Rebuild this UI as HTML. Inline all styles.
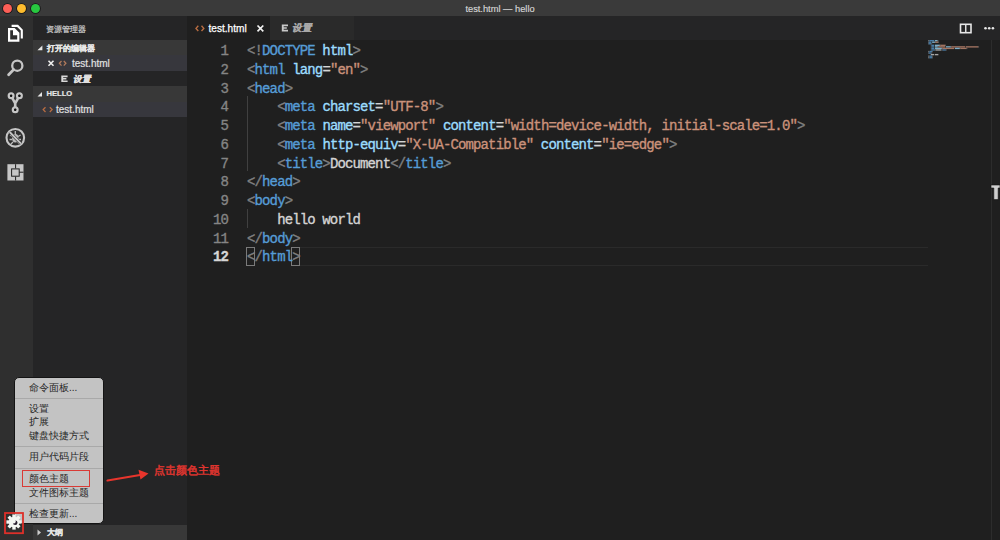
<!DOCTYPE html>
<html><head><meta charset="utf-8">
<style>
*{margin:0;padding:0;box-sizing:border-box}
html,body{width:1000px;height:540px;overflow:hidden;background:#1f1f1f;font-family:"Liberation Sans",sans-serif}
.a{position:absolute}
svg{position:absolute;overflow:visible}
#title{left:0;top:0;width:1000px;height:16px;background:#3a3a3a}
.tl{top:3.5px;width:9px;height:9px;border-radius:50%;box-shadow:0 0 0 0.8px rgba(10,10,10,.75)}
#ttext{left:0;top:3.5px;width:1000px;text-align:center;color:#d6d6d6;font-size:9.3px;line-height:11px;-webkit-text-stroke:0.15px}
#act{left:0;top:16px;width:33px;height:524px;background:#2f2f2f}
#side{left:33px;top:16px;width:154px;height:524px;background:#252526}
#tabs{left:187px;top:16px;width:813px;height:24px;background:#252526}
.sh{left:33px;width:154px;background:#383838}
.code{font-family:"Liberation Mono",monospace;font-size:14px;letter-spacing:-0.87px;white-space:pre;line-height:18.76px;color:#d4d4d4;-webkit-text-stroke:0.35px}
.ln{left:186px;width:42px;text-align:right;color:#858585}
.t{color:#569cd6}.at{color:#9cdcfe}.s{color:#cb927b}.p{color:#808080}
.ui{color:#cccccc;font-size:10px;white-space:nowrap;line-height:12px;-webkit-text-stroke:0.2px}
#menu{left:14px;top:377px;width:89.5px;height:147px;background:#c3c3c3;border:1px solid #141414;border-radius:5px}
.mi{left:29px;color:#262626;font-size:10px;line-height:12px;white-space:nowrap}
.sep{left:15px;width:87.5px;height:1px;background:#a9a9a9}
.guide{width:1px;background:#404040}
</style></head><body>
<div class="a" id="title"></div>
<div class="a tl" style="left:3px;background:#fc5f57"></div>
<div class="a tl" style="left:17px;background:#fdbc2e"></div>
<div class="a tl" style="left:31px;background:#28c840"></div>
<div class="a" id="ttext">test.html — hello</div>

<div class="a" id="act"></div>
<div class="a" id="side"></div>
<div class="a" id="tabs"></div>

<!-- activity bar icons -->
<svg style="left:0;top:16px" width="33" height="180" viewBox="0 16 33 180">
  <!-- files -->
  <path d="M11.6 25.9 H17.6 L21.8 30.1 V38.6" fill="none" stroke="#fff" stroke-width="2.1"/>
  <path d="M8 28 H14.6 L19.4 32.8 V41.8 H8 Z" fill="#fff"/>
  <path d="M10.2 30.2 H13 V35.2 H17.2 V39.6 H10.2 Z" fill="#2f2f2f"/>
  <!-- search -->
  <circle cx="17.3" cy="65.7" r="5.1" fill="none" stroke="#c6c6c6" stroke-width="2.3"/>
  <path d="M13.6 69.6 L8.6 74.8" stroke="#c6c6c6" stroke-width="2.8" stroke-linecap="round"/>
  <!-- git -->
  <path d="M11.1 95.8 L15.2 103.3 L19.4 95.8 M15.2 103.3 V109.8" fill="none" stroke="#c6c6c6" stroke-width="2.6"/>
  <circle cx="11.1" cy="95.8" r="2.3" fill="#2f2f2f" stroke="#c6c6c6" stroke-width="2.4"/>
  <circle cx="19.4" cy="95.8" r="2.3" fill="#2f2f2f" stroke="#c6c6c6" stroke-width="2.4"/>
  <circle cx="15.2" cy="109.8" r="2.3" fill="#2f2f2f" stroke="#c6c6c6" stroke-width="2.4"/>
  <circle cx="11.1" cy="95.8" r="1.2" fill="#111"/>
  <circle cx="19.4" cy="95.8" r="1.2" fill="#111"/>
  <circle cx="15.2" cy="109.8" r="1.2" fill="#111"/>
  <!-- debug -->
  <circle cx="15.3" cy="137.8" r="8.8" fill="none" stroke="#c6c6c6" stroke-width="2.1"/>
  <ellipse cx="15.3" cy="138.3" rx="3.2" ry="4.2" fill="#bdbdbd"/>
  <path d="M15.3 131 V134 M10 135 L12.5 136.5 M20.6 135 L18.1 136.5 M9.5 139.5 H12 M21 139.5 H18.6 M11 144 L13 142 M19.6 144 L17.6 142" stroke="#bdbdbd" stroke-width="1.3"/>
  <path d="M9.6 132 L21 143.6" stroke="#2f2f2f" stroke-width="3.2"/>
  <path d="M9.6 132 L21 143.6" stroke="#c6c6c6" stroke-width="1.9"/>
  <!-- extensions -->
  <rect x="7.4" y="164.2" width="16.1" height="16.3" fill="#c6c6c6"/>
  <rect x="11.6" y="168.9" width="7.6" height="7.3" fill="#c6c6c6" stroke="#1e1e1e" stroke-width="1"/>
  <path d="M15.6 164.2 V168.4 M19.2 172.2 H23.5 M15.6 176.6 V180.5" stroke="#1e1e1e" stroke-width="1"/>
</svg>

<!-- sidebar -->
<div class="a ui" style="left:46px;top:23.5px;font-size:8px;color:#c8c8c8;-webkit-text-stroke:0.25px">资源管理器</div>
<div class="a sh" style="top:40px;height:15px"></div>
<div class="a" style="left:33px;top:55px;width:154px;height:16px;background:#37373d"></div>
<div class="a sh" style="top:86px;height:15.5px"></div>
<div class="a" style="left:33px;top:101.5px;width:154px;height:15.5px;background:#37373d"></div>
<svg style="left:0;top:0" width="200" height="140">
  <path d="M42.4 45.5 V50.3 H37.4 Z" fill="#e6e6e6"/>
  <path d="M42 92 V96.5 H37.5 Z" fill="#e6e6e6"/>
  <path d="M48.5 60.8 L53.5 65.8 M53.5 60.8 L48.5 65.8" stroke="#f0f0f0" stroke-width="1.6"/>
  <path d="M61.5 61 L59.4 63.3 L61.5 65.6 M63.8 61 L65.9 63.3 L63.8 65.6" fill="none" stroke="#b07a5c" stroke-width="1.3"/>
  <path d="M45.5 107.2 L43.2 109.6 L45.5 112 M49.8 107.2 L52.1 109.6 L49.8 112" fill="none" stroke="#b86d42" stroke-width="1.3"/>
  <path d="M61.3 75.6 H67.6 V77.2 H63.2 V78 H66.4 V79.6 H63.2 V80.4 H67.6 V82 H61.3 Z" fill="#d8d8d8"/>
</svg>
<div class="a ui" style="left:46.5px;top:42.8px;font-size:7.5px;color:#e8e8e8;font-weight:bold">打开的编辑器</div>
<div class="a ui" style="left:72px;top:57.5px;color:#e0e0e0">test.html</div>
<div class="a ui" style="left:73px;top:73px;font-size:8.6px;color:#e0e0e0;font-style:italic;font-weight:bold">设置</div>
<div class="a ui" style="left:46.5px;top:88px;font-size:7.6px;font-weight:bold;color:#e6e6e6">HELLO</div>
<div class="a ui" style="left:56px;top:104px;color:#e0e0e0">test.html</div>
<!-- outline section -->
<div class="a sh" style="top:524.5px;height:15.5px"></div>
<svg style="left:0;top:0" width="100" height="540"><path d="M37.5 529.5 L41 532.5 L37.5 535.5 Z" fill="#ccc"/></svg>
<div class="a ui" style="left:46.5px;top:526.5px;font-size:8px;color:#e6e6e6;font-weight:bold">大纲</div>

<!-- tabs -->
<div class="a" style="left:187px;top:16px;width:82.5px;height:24px;background:#1f1f1f"></div>
<div class="a" style="left:269.5px;top:16px;width:84px;height:24px;background:#2a2a2a"></div>
<svg style="left:0;top:0" width="400" height="40">
  <path d="M198.3 25.8 L196 28.4 L198.3 31 M201.5 25.8 L203.8 28.4 L201.5 31" fill="none" stroke="#b86d42" stroke-width="1.4"/>
  <path d="M257.5 25.5 L263.3 31.3 M263.3 25.5 L257.5 31.3" stroke="#f2f2f2" stroke-width="1.7"/>
  <path d="M281.8 24.6 H288 V26.2 H283.7 V27.2 H286.8 V28.8 H283.7 V29.8 H288 V31.6 H281.8 Z" fill="#c8c8c8"/>
</svg>
<div class="a ui" style="left:208.5px;top:22.5px;color:#ffffff;font-size:10.1px;-webkit-text-stroke:0.25px">test.html</div>
<div class="a ui" style="left:292px;top:22px;font-size:9.5px;font-style:italic;font-weight:bold;color:#a8a8a8">设置</div>
<svg style="left:900px;top:16px" width="100" height="30" viewBox="900 16 100 30">
  <rect x="960.5" y="24.3" width="10.5" height="8.4" fill="none" stroke="#e8e8e8" stroke-width="1.6"/>
  <path d="M965.75 24.3 V32.7" stroke="#e8e8e8" stroke-width="1.4"/>
  <circle cx="985.5" cy="28.2" r="1.3" fill="#e8e8e8"/>
  <circle cx="989.2" cy="28.2" r="1.3" fill="#e8e8e8"/>
  <circle cx="992.9" cy="28.2" r="1.3" fill="#e8e8e8"/>
</svg>

<!-- editor decorations -->
<div class="a guide" style="left:247px;top:96px;height:75px"></div>
<div class="a guide" style="left:247px;top:209px;height:19px"></div>
<div class="a" style="left:300px;top:247px;width:628px;height:1px;background:#2a2a2a"></div>
<div class="a" style="left:300px;top:265px;width:628px;height:1px;background:#2a2a2a"></div>
<div class="a" style="left:246px;top:247px;width:9px;height:18.5px;border:1px solid #7a7a7a"></div>
<div class="a" style="left:291px;top:247px;width:9px;height:18.5px;border:1px solid #7a7a7a"></div>
<div class="a" style="left:991px;top:40px;width:1px;height:500px;background:#2c2c2c"></div>
<!-- minimap -->
<svg style="left:0;top:0" width="1000" height="80" opacity="0.75"><rect x="928.00" y="40.00" width="1.38" height="1.35" fill="#808080"/><rect x="929.38" y="40.00" width="4.83" height="1.35" fill="#569cd6"/><rect x="934.90" y="40.00" width="2.76" height="1.35" fill="#9cdcfe"/><rect x="937.66" y="40.00" width="0.69" height="1.35" fill="#808080"/><rect x="928.00" y="41.55" width="0.69" height="1.35" fill="#808080"/><rect x="928.69" y="41.55" width="2.76" height="1.35" fill="#569cd6"/><rect x="932.14" y="41.55" width="2.76" height="1.35" fill="#9cdcfe"/><rect x="934.90" y="41.55" width="0.69" height="1.35" fill="#d4d4d4"/><rect x="935.59" y="41.55" width="2.76" height="1.35" fill="#ce9178"/><rect x="938.35" y="41.55" width="0.69" height="1.35" fill="#808080"/><rect x="928.00" y="43.10" width="0.69" height="1.35" fill="#808080"/><rect x="928.69" y="43.10" width="2.76" height="1.35" fill="#569cd6"/><rect x="931.45" y="43.10" width="0.69" height="1.35" fill="#808080"/><rect x="930.76" y="44.65" width="0.69" height="1.35" fill="#808080"/><rect x="931.45" y="44.65" width="2.76" height="1.35" fill="#569cd6"/><rect x="934.90" y="44.65" width="4.83" height="1.35" fill="#9cdcfe"/><rect x="939.73" y="44.65" width="0.69" height="1.35" fill="#d4d4d4"/><rect x="940.42" y="44.65" width="4.83" height="1.35" fill="#ce9178"/><rect x="945.25" y="44.65" width="0.69" height="1.35" fill="#808080"/><rect x="930.76" y="46.20" width="0.69" height="1.35" fill="#808080"/><rect x="931.45" y="46.20" width="2.76" height="1.35" fill="#569cd6"/><rect x="934.90" y="46.20" width="2.76" height="1.35" fill="#9cdcfe"/><rect x="937.66" y="46.20" width="0.69" height="1.35" fill="#d4d4d4"/><rect x="938.35" y="46.20" width="6.90" height="1.35" fill="#ce9178"/><rect x="945.94" y="46.20" width="4.83" height="1.35" fill="#9cdcfe"/><rect x="950.77" y="46.20" width="0.69" height="1.35" fill="#d4d4d4"/><rect x="951.46" y="46.20" width="13.80" height="1.35" fill="#ce9178"/><rect x="965.95" y="46.20" width="12.42" height="1.35" fill="#ce9178"/><rect x="978.37" y="46.20" width="0.69" height="1.35" fill="#808080"/><rect x="930.76" y="47.75" width="0.69" height="1.35" fill="#808080"/><rect x="931.45" y="47.75" width="2.76" height="1.35" fill="#569cd6"/><rect x="934.90" y="47.75" width="6.90" height="1.35" fill="#9cdcfe"/><rect x="941.80" y="47.75" width="0.69" height="1.35" fill="#d4d4d4"/><rect x="942.49" y="47.75" width="11.73" height="1.35" fill="#ce9178"/><rect x="954.91" y="47.75" width="4.83" height="1.35" fill="#9cdcfe"/><rect x="959.74" y="47.75" width="0.69" height="1.35" fill="#d4d4d4"/><rect x="960.43" y="47.75" width="6.21" height="1.35" fill="#ce9178"/><rect x="966.64" y="47.75" width="0.69" height="1.35" fill="#808080"/><rect x="930.76" y="49.30" width="0.69" height="1.35" fill="#808080"/><rect x="931.45" y="49.30" width="3.45" height="1.35" fill="#569cd6"/><rect x="934.90" y="49.30" width="0.69" height="1.35" fill="#808080"/><rect x="935.59" y="49.30" width="5.52" height="1.35" fill="#d4d4d4"/><rect x="941.11" y="49.30" width="1.38" height="1.35" fill="#808080"/><rect x="942.49" y="49.30" width="3.45" height="1.35" fill="#569cd6"/><rect x="945.94" y="49.30" width="0.69" height="1.35" fill="#808080"/><rect x="928.00" y="50.85" width="1.38" height="1.35" fill="#808080"/><rect x="929.38" y="50.85" width="2.76" height="1.35" fill="#569cd6"/><rect x="932.14" y="50.85" width="0.69" height="1.35" fill="#808080"/><rect x="928.00" y="52.40" width="0.69" height="1.35" fill="#808080"/><rect x="928.69" y="52.40" width="2.76" height="1.35" fill="#569cd6"/><rect x="931.45" y="52.40" width="0.69" height="1.35" fill="#808080"/><rect x="930.76" y="53.95" width="3.45" height="1.35" fill="#d4d4d4"/><rect x="934.90" y="53.95" width="3.45" height="1.35" fill="#d4d4d4"/><rect x="928.00" y="55.50" width="1.38" height="1.35" fill="#808080"/><rect x="929.38" y="55.50" width="2.76" height="1.35" fill="#569cd6"/><rect x="932.14" y="55.50" width="0.69" height="1.35" fill="#808080"/><rect x="928.00" y="57.05" width="1.38" height="1.35" fill="#808080"/><rect x="929.38" y="57.05" width="2.76" height="1.35" fill="#569cd6"/><rect x="932.14" y="57.05" width="0.69" height="1.35" fill="#808080"/></svg>
<!-- right T -->
<svg style="left:980px;top:180px" width="20" height="25" viewBox="980 180 20 25">
  <path d="M991 185 H1000 V188 H998.2 V199.6 H993.8 V188 H991 Z" fill="#cfcfcf" stroke="#111" stroke-width="0.6"/>
</svg>

<!-- code -->
<div class="a code ln" style="top:42px">1
2
3
4
5
6
7
8
9
10
11
<span style="color:#d6d6d6;font-weight:bold">12</span></div>
<div class="a code" style="left:247px;top:42px"><span class="p">&lt;!</span><span class="t">DOCTYPE</span> <span class="at">html</span><span class="p">&gt;</span>
<span class="p">&lt;</span><span class="t">html</span> <span class="at">lang</span>=<span class="s">"en"</span><span class="p">&gt;</span>
<span class="p">&lt;</span><span class="t">head</span><span class="p">&gt;</span>
    <span class="p">&lt;</span><span class="t">meta</span> <span class="at">charset</span>=<span class="s">"UTF-8"</span><span class="p">&gt;</span>
    <span class="p">&lt;</span><span class="t">meta</span> <span class="at">name</span>=<span class="s">"viewport"</span> <span class="at">content</span>=<span class="s">"width=device-width, initial-scale=1.0"</span><span class="p">&gt;</span>
    <span class="p">&lt;</span><span class="t">meta</span> <span class="at">http-equiv</span>=<span class="s">"X-UA-Compatible"</span> <span class="at">content</span>=<span class="s">"ie=edge"</span><span class="p">&gt;</span>
    <span class="p">&lt;</span><span class="t">title</span><span class="p">&gt;</span>Document<span class="p">&lt;/</span><span class="t">title</span><span class="p">&gt;</span>
<span class="p">&lt;/</span><span class="t">head</span><span class="p">&gt;</span>
<span class="p">&lt;</span><span class="t">body</span><span class="p">&gt;</span>
    hello world
<span class="p">&lt;/</span><span class="t">body</span><span class="p">&gt;</span>
<span class="p">&lt;/</span><span class="t">html</span><span class="p">&gt;</span></div>

<!-- menu -->
<div class="a" id="menu"></div>
<div class="a mi" style="top:382px">命令面板...</div>
<div class="a sep" style="top:398px"></div>
<div class="a mi" style="top:403px">设置</div>
<div class="a mi" style="top:416px">扩展</div>
<div class="a mi" style="top:430px">键盘快捷方式</div>
<div class="a sep" style="top:446px"></div>
<div class="a mi" style="top:451px">用户代码片段</div>
<div class="a sep" style="top:468px"></div>
<div class="a mi" style="top:473px">颜色主题</div>
<div class="a mi" style="top:487px">文件图标主题</div>
<div class="a sep" style="top:503px"></div>
<div class="a mi" style="top:508px">检查更新...</div>
<div class="a" style="left:21.5px;top:470px;width:68px;height:17px;border:1.5px solid #d93a35"></div>

<!-- gear + red box -->
<svg style="left:0;top:500px" width="40" height="40" viewBox="0 500 40 40">
  <g transform="translate(14 522)">
    <path d="M-1.6 -7 H1.6 L2 -4.6 L3.6 -3.9 L5.5 -5.3 L7.7 -3.1 L6.3 -1.2 L6.9 0.4 L9.3 0.8 V4 L6.9 4.4" fill="none"/>
    <circle r="5.3" fill="#f4f6f2"/>
    <g fill="#f4f6f2">
      <rect x="-1.7" y="-7.6" width="3.4" height="15.2"/>
      <rect x="-1.7" y="-7.6" width="3.4" height="15.2" transform="rotate(45)"/>
      <rect x="-1.7" y="-7.6" width="3.4" height="15.2" transform="rotate(90)"/>
      <rect x="-1.7" y="-7.6" width="3.4" height="15.2" transform="rotate(135)"/>
    </g>
    <circle cx="1.2" cy="0.8" r="2.3" fill="#2a2030"/><circle cx="-0.2" cy="-0.5" r="1.9" fill="#f4f6f2"/>
  </g>
  <rect x="5" y="513" width="18" height="20.2" fill="none" stroke="#dd302a" stroke-width="1.8"/>
</svg>

<!-- annotation -->
<svg style="left:0;top:0" width="240" height="540">
  <path d="M107.5 480.5 L140 475" stroke="#e8352c" stroke-width="2.2" stroke-linecap="round"/>
  <path d="M148.5 473.6 L138.5 469.8 L140.5 479.6 Z" fill="#e8352c"/>
</svg>
<div class="a" style="left:154px;top:463.5px;color:#e0352f;font-size:11px;line-height:13px;white-space:nowrap;-webkit-text-stroke:0.45px">点击颜色主题</div>
</body></html>
